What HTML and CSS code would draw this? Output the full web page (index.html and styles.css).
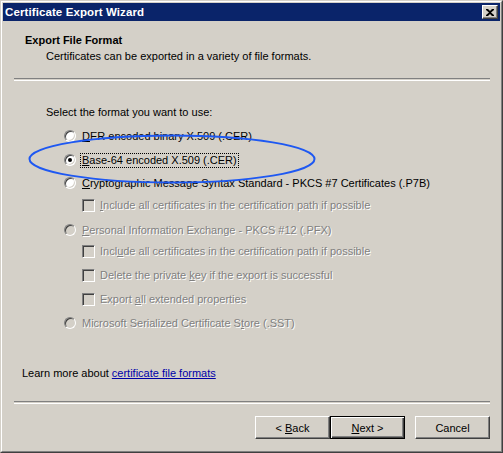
FILE: index.html
```html
<!DOCTYPE html>
<html>
<head>
<meta charset="utf-8">
<link rel="stylesheet" href="styles.css">
</head>
<body>
<div class="window">
  <div class="frame">
    <div class="titlebar">
      <span class="title">Certificate Export Wizard</span>
      <span class="close">
        <svg width="8" height="7" viewBox="0 0 8 7"><path d="M0 0h2l2 2 2-2h2v1L5 3.5 8 6v1H6L4 5 2 7H0V6l3-2.5L0 1z" fill="#000"/></svg>
      </span>
    </div>
    <div class="body">
      <div class="header">
        <div class="h-title">Export File Format</div>
        <div class="h-sub">Certificates can be exported in a variety of file formats.</div>
      </div>
      <div class="sep top-sep"></div>
      <div class="content">
        <div class="row prompt">Select the format you want to use:</div>
        <div class="row opt r-der"><span class="radio"></span><span class="lbl"><u>D</u>ER encoded binary X.509 (.CER)</span></div>
        <div class="row opt r-b64"><span class="radio checked"></span><span class="lbl focus"><u>B</u>ase-64 encoded X.509 (.CER)</span></div>
        <div class="row opt r-p7b"><span class="radio"></span><span class="lbl"><u>C</u>ryptographic Message Syntax Standard - PKCS #7 Certificates (.P7B)</span></div>
        <div class="row sub r-cb1"><span class="check"></span><span class="lbl dis"><u>I</u>nclude all certificates in the certification path if possible</span></div>
        <div class="row opt r-pfx"><span class="radio dis"></span><span class="lbl dis"><u>P</u>ersonal Information Exchange - PKCS #12 (.PFX)</span></div>
        <div class="row sub r-cb2"><span class="check"></span><span class="lbl dis">Incl<u>u</u>de all certificates in the certification path if possible</span></div>
        <div class="row sub r-cb3"><span class="check"></span><span class="lbl dis">Delete the private <u>k</u>ey if the export is successful</span></div>
        <div class="row sub r-cb4"><span class="check"></span><span class="lbl dis">Export <u>a</u>ll extended properties</span></div>
        <div class="row opt r-sst"><span class="radio dis"></span><span class="lbl dis">Microsoft Serialized Certificate S<u>t</u>ore (.SST)</span></div>
        <div class="row learn">Learn more about <a class="link" href="#">certificate file formats</a></div>
        <svg class="ellipse" width="320" height="60" viewBox="0 0 320 60"><ellipse cx="146" cy="30" rx="142.5" ry="23.5" fill="none" stroke="#1e58f2" stroke-width="2"/></svg>
      </div>
      <div class="sep bottom-sep"></div>
      <div class="buttons">
        <div class="btn"><span>&lt; <u>B</u>ack</span></div>
        <div class="btn default"><span><u>N</u>ext &gt;</span></div>
        <div class="btn cancel"><span>Cancel</span></div>
      </div>
    </div>
  </div>
</div>
</body>
</html>
```
FILE: styles.css
```css
html, body {
  margin: 0;
  padding: 0;
  background: #d4d0c8;
}
body {
  font-family: "Liberation Sans", Arial, sans-serif;
  font-size: 11px;
  color: #000;
}
.window {
  width: 503px;
  height: 453px;
  box-sizing: border-box;
  border: 1px solid;
  border-color: #d4d0c8 #404040 #404040 #d4d0c8;
}
.frame {
  height: 100%;
  box-sizing: border-box;
  border: 1px solid;
  border-color: #ffffff #808080 #808080 #ffffff;
  padding: 1px;
  display: flex;
  flex-direction: column;
}
.titlebar {
  height: 18px;
  background: #0a246a;
  display: flex;
  align-items: center;
  justify-content: space-between;
  padding: 0 2px 0 2px;
}
.title {
  color: #fff;
  font-weight: bold;
  font-size: 11.5px;
  letter-spacing: 0.1px;
}
.close {
  width: 16px;
  height: 14px;
  box-sizing: border-box;
  background: #d4d0c8;
  border: 1px solid;
  border-color: #ffffff #404040 #404040 #ffffff;
  box-shadow: inset -1px -1px 0 #808080;
  display: flex;
  align-items: center;
  justify-content: center;
  padding-right: 1px;
}
.body {
  flex: 1;
  display: flex;
  flex-direction: column;
}
.header {
  padding-top: 12px;
  line-height: 14px;
}
.h-title {
  font-weight: bold;
  padding-left: 22px;
}
.h-sub {
  padding-left: 43px;
  margin-top: 2px;
}
.sep {
  height: 1px;
  border-top: 1px solid #808080;
  border-bottom: 1px solid #ffffff;
  margin-left: 11px;
  margin-right: 10px;
}
.top-sep {
  margin-top: 15px;
}
.content {
  position: relative;
  flex: 1;
}
.row {
  height: 20px;
  display: flex;
  align-items: center;
  white-space: nowrap;
}
.prompt { margin-top: 21px; padding-left: 43px; }
.opt { padding-left: 61px; }
.sub { padding-left: 79px; }
.r-der { margin-top: 4px; }
.r-b64 { margin-top: 4px; }
.r-p7b { margin-top: 3px; }
.r-cb1 { margin-top: 2px; }
.r-pfx { margin-top: 5px; }
.r-cb2 { margin-top: 1px; }
.r-cb3 { margin-top: 4px; }
.r-cb4 { margin-top: 4px; }
.r-sst { margin-top: 4px; }
.learn { margin-top: 30px; padding-left: 19px; }
.radio {
  width: 12px;
  height: 12px;
  box-sizing: border-box;
  border-radius: 50%;
  border: 1px solid;
  border-color: #808080 #ffffff #ffffff #808080;
  box-shadow: inset 1px 1px 0 #404040, inset -1px -1px 0 #d4d0c8;
  background: #fff;
  margin-right: 6px;
  flex: none;
  position: relative;
}
.radio.checked::after {
  content: "";
  position: absolute;
  left: 3px;
  top: 3px;
  width: 4px;
  height: 4px;
  border-radius: 50%;
  background: #000;
}
.radio.dis {
  background: #d4d0c8;
}
.check {
  width: 13px;
  height: 13px;
  box-sizing: border-box;
  border: 1px solid;
  border-color: #808080 #ffffff #ffffff #808080;
  box-shadow: inset 1px 1px 0 #404040, inset -1px -1px 0 #d4d0c8;
  background: #d4d0c8;
  margin-right: 5px;
  flex: none;
}
.lbl {
  line-height: 13px;
}
.lbl.focus {
  outline: 1px dotted #000;
  outline-offset: 0;
  padding: 0 1px;
  margin-left: -1px;
}
.lbl.dis {
  color: #808080;
  text-shadow: 1px 1px 0 #ffffff;
}
.link {
  color: #0000a8;
  text-decoration: underline;
  margin-left: 3px;
}
.ellipse {
  position: absolute;
  left: 23px;
  top: 48px;
  overflow: visible;
}
.bottom-sep {
  margin-top: 0;
}
.buttons {
  display: flex;
  justify-content: flex-end;
  padding: 12px 10px 0 0;
  height: 46px;
  box-sizing: border-box;
}
.btn {
  width: 75px;
  height: 23px;
  box-sizing: border-box;
  border: 1px solid;
  border-color: #ffffff #404040 #404040 #ffffff;
  box-shadow: inset -1px -1px 0 #808080;
  display: flex;
  align-items: center;
  justify-content: center;
}
.btn.default {
  border: 1px solid #000;
  box-shadow: inset 1px 1px 0 #ffffff, inset -1px -1px 0 #404040, inset -2px -2px 0 #808080;
}
.btn.cancel {
  margin-left: 10px;
}
```
